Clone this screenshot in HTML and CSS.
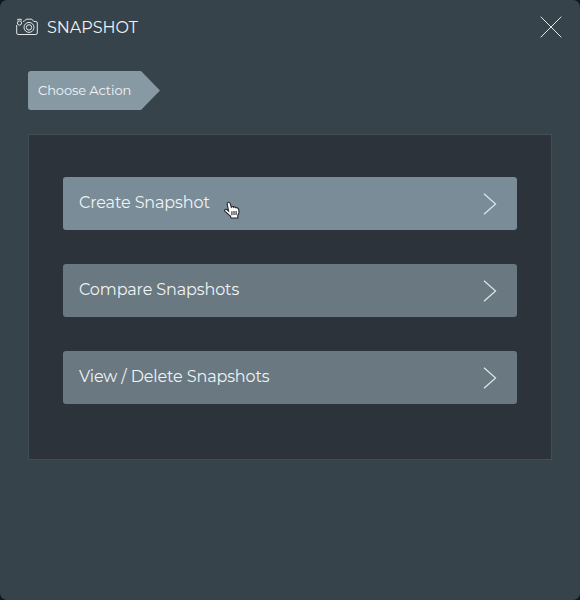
FILE: index.html
```html
<!DOCTYPE html>
<html lang="en">
<head>
<meta charset="utf-8">
<title>Snapshot</title>
<link rel="stylesheet" href="styles.css">
</head>
<body>
<main class="dialog">
  <header class="header">
    <svg class="camera" viewBox="0 0 22 18">
      <path d="M7 3.3H8.2L10.2 1.2h5.6L17.8 3.5h2a1.5 1.5 0 0 1 1.5 1.5V15a1.5 1.5 0 0 1-1.5 1.5H2.2A1.5 1.5 0 0 1 .7 15V7M1.7 2.5V1.3h3.6v1.2"/>
      <circle cx="3.5" cy="5" r="2.1"/>
      <circle cx="13" cy="9.4" r="5"/><circle cx="13" cy="9.4" r="2.7"/>
    </svg>
    <h1 class="title">SNAPSHOT</h1>
    <svg class="close" viewBox="0 0 22 22"><path d="M.7.7 21.3 21.3M21.3.7.7 21.3"/></svg>
  </header>
  <div class="step">
    <svg class="step-shape" viewBox="0 0 132 39"><path d="M3 0H113L132 19.5 113 39H3Q0 39 0 36V3Q0 0 3 0Z"/></svg>
    <span class="step-label">Choose Action</span>
  </div>
  <section class="panel">
    <button class="action active"><span>Create Snapshot</span><svg class="chevron" viewBox="0 0 14 22"><path d="M1 .8 12.6 11 1 21.2"/></svg>
      <svg class="pointer" viewBox="0 0 16 18"><path d="M4.6 10 3.2 3.2C2.8 1.1 5.5.5 6.1 2.4L7.3 6.2C7.9 5.2 9.3 5.3 9.6 6.3 10.3 5.6 11.6 5.9 11.9 6.8 13 6.3 14.3 7.1 14.6 8.3L15.1 11.5 13.8 14.4V17H7L6.4 15.1 1 10.5C0 9.1 1.4 7.8 2.8 8.5Z"/><path d="M7.9 10.3v4M10 10.1v4M12.1 10.1v4"/></svg>
    </button>
    <button class="action"><span>Compare Snapshots</span><svg class="chevron" viewBox="0 0 14 22"><path d="M1 .8 12.6 11 1 21.2"/></svg></button>
    <button class="action"><span>View / Delete Snapshots</span><svg class="chevron" viewBox="0 0 14 22"><path d="M1 .8 12.6 11 1 21.2"/></svg></button>
  </section>
</main>
</body>
</html>
```
FILE: styles.css
```css
* { box-sizing: border-box; }
html { background: #11171b; }
body { margin: 0; font-family: Montserrat, Inter, sans-serif; color: #f0f3f4; }
svg { display: block; fill: none; stroke: #e2e8ea; }
.dialog { height: 600px; background: #37434a; border-radius: 7px; overflow: hidden; }
.header { display: flex; align-items: center; height: 54px; padding: 0 18px 0 16px; }
.camera { width: 22px; height: 18px; stroke-width: 1; }
.title { margin: 1px 0 0 9px; font-size: 16px; font-weight: 400; line-height: 20px; letter-spacing: -.03px; white-space: nowrap; }
.close { width: 22px; height: 22px; margin-left: auto; stroke-width: 1; }
.step { display: grid; align-items: center; width: 132px; height: 39px; margin: 17px 0 0 28px; }
.step-shape, .step-label { grid-area: 1 / 1; }
.step-shape { width: 132px; height: 39px; fill: #879aa4; stroke: none; }
.step-label { margin-top: -1px; padding-left: 10px; font-size: 13px; letter-spacing: -.08px; white-space: nowrap; }
.panel { display: flex; flex-direction: column; gap: 34px; width: 524px; height: 326px; margin: 24px 0 0 28px; padding: 42px 34px; background: #2c333a; border: 1px solid #414e56; }
.action { position: relative; display: flex; align-items: center; justify-content: space-between; width: 454px; height: 53px; padding: 0 20px 0 16px; border: 0; border-radius: 3px; background: #697881; color: #f0f3f4; font: 400 16px/20px Montserrat, Inter, sans-serif; letter-spacing: -.12px; }
.action.active { background: #798c98; }
.action span { margin-top: -2px; white-space: nowrap; }
.chevron { width: 14px; height: 22px; stroke-width: 1.15; }
.pointer { position: absolute; left: 161px; top: 24px; width: 16px; height: 18px; fill: #fff; stroke: #22272b; stroke-width: 1.1; }
```
